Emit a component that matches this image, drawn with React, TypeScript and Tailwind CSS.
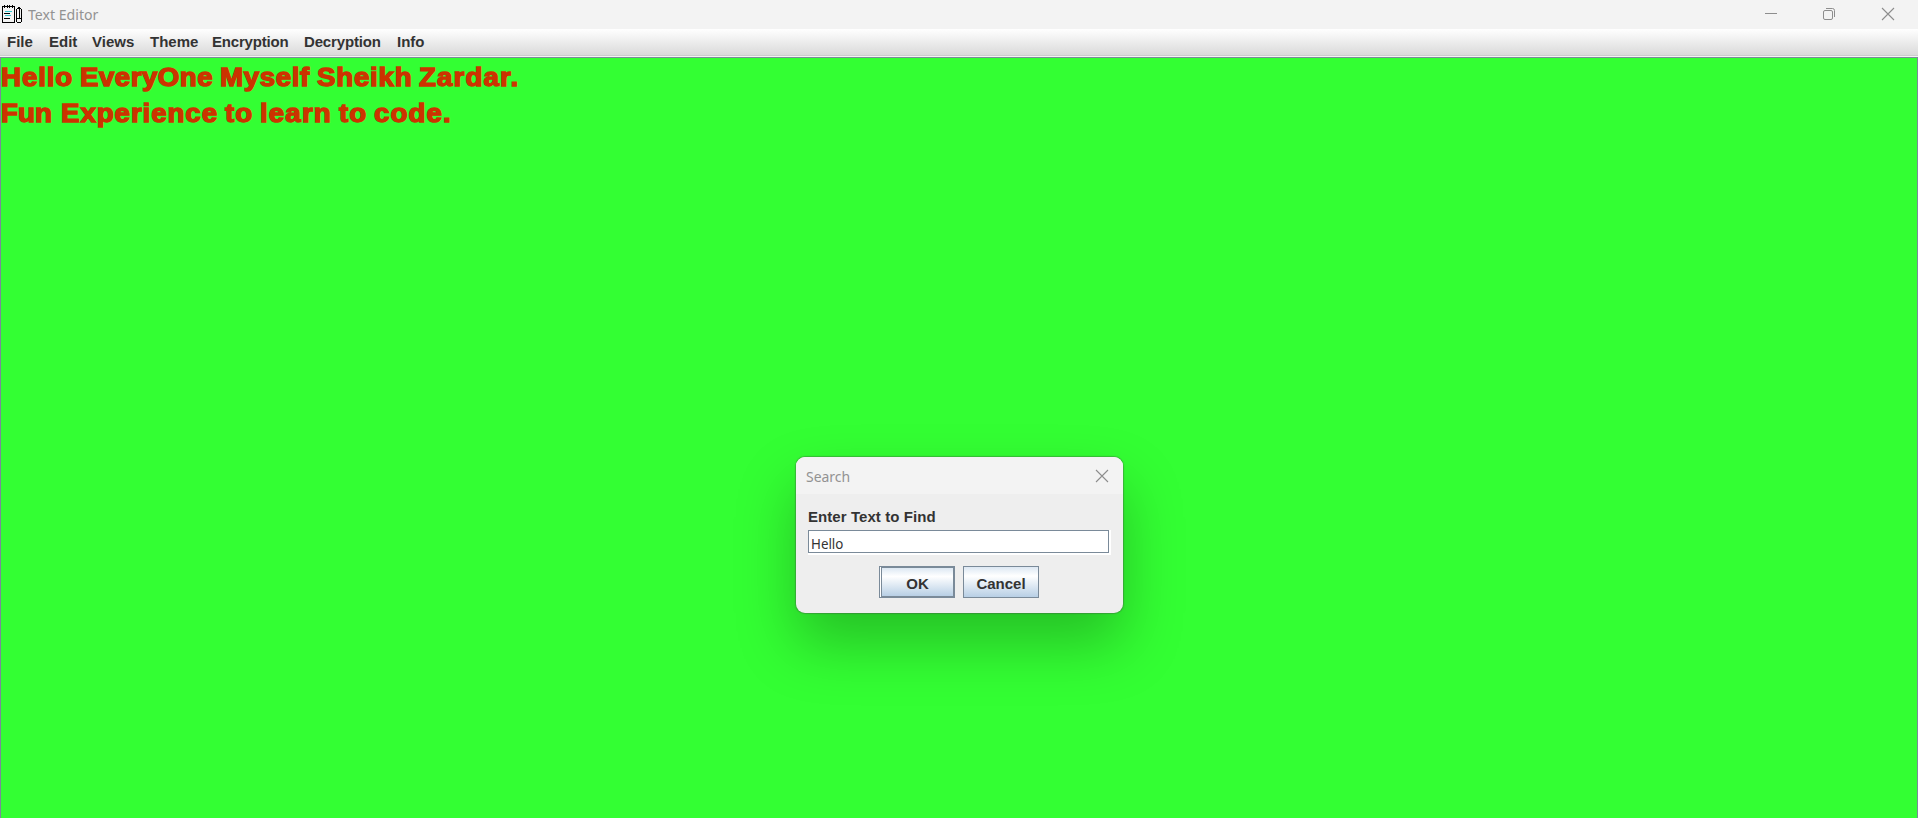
import React from "react";

const menus = [
  { label: "File", cls: "w-[42px]" },
  { label: "Edit", cls: "w-[43px]" },
  { label: "Views", cls: "w-[58px]" },
  { label: "Theme", cls: "w-[62px]" },
  { label: "Encryption", cls: "w-[92px] tracking-[-0.2px]" },
  { label: "Decryption", cls: "w-[93px] tracking-[-0.15px]" },
  { label: "Info", cls: "w-[40px]" },
];

const lines = [
  [
    { word: "Hello", cls: "w-[79px] tracking-[0.78px]" },
    { word: "EveryOne", cls: "w-[139.5px] tracking-[0.4px]" },
    { word: "Myself", cls: "w-[97px] tracking-[0.5px]" },
    { word: "Sheikh", cls: "w-[102px] tracking-[0.65px]" },
    { word: "Zardar.", cls: "w-[104px] tracking-[1px]" },
  ],
  [
    { word: "Fun", cls: "w-[59.5px] tracking-[0.1px]" },
    { word: "Experience", cls: "w-[164px] tracking-[0.8px]" },
    { word: "to", cls: "w-[35px] tracking-[0.95px]" },
    { word: "learn", cls: "w-[79.5px] tracking-[1px]" },
    { word: "to", cls: "w-[34.5px] tracking-[0.95px]" },
    { word: "code.", cls: "w-[82px] tracking-[0.94px]" },
  ],
];

function NotepadIcon() {
  return (
    <svg width="20" height="18" viewBox="0 0 20 18" shapeRendering="crispEdges" fill="none" stroke="#000">
      <path d="M0.5 1V17.5H12.5V1.5H0" />
      <path d="M2.5 0V3M5.5 0V3M7.5 0V3M10.5 0V3" />
      <path d="M3 6.5H10M3 10.5H9" stroke="#35c4cc" />
      <path d="M2 8.5H8M2 13.5H8" />
      <path d="M14.5 4V17M19.5 4V17M15 3.5H19M16 2.5H18M15 17.5H19M15 13.5H19M17.5 4V13" />
    </svg>
  );
}

function CloseIcon() {
  return (
    <svg width="14" height="14" viewBox="0 0 14 14" fill="none" stroke="#8d8d8d" strokeWidth="1.1">
      <path d="M1 1L13 13M13 1L1 13" />
    </svg>
  );
}

export default function App() {
  return (
    <div className="relative flex h-[818px] w-[1918px] flex-col overflow-hidden bg-[#f3f3f3] font-['Liberation_Sans',sans-serif] text-[#333]">
      <header className="flex h-[29px] shrink-0 items-start justify-between">
        <div className="flex pl-[2px] pt-[5px]">
          <NotepadIcon />
          <span className="ml-[6px] origin-left scale-x-[0.94] font-['Noto_Sans',sans-serif] text-[15px] leading-[19px] text-[#929292]">Text Editor</span>
        </div>
        <div className="flex items-center pr-[23px] pt-[7px]">
          <svg width="14" height="14" viewBox="0 0 14 14"><path d="M1 6.5H13" stroke="#8d8d8d" /></svg>
          <svg className="ml-[44px] mr-[45px]" width="14" height="14" viewBox="0 0 14 14" fill="none" stroke="#8d8d8d"><rect x="1.5" y="3.5" width="9" height="9" rx="1.5" /><path d="M4 1.5H10.5Q12.5 1.5 12.5 3.5V10" /></svg>
          <CloseIcon />
        </div>
      </header>
      <nav className="flex h-[27px] shrink-0 border-b border-[#cccccc] bg-linear-to-b from-white to-[#dadada] pl-[7px] text-[15px] font-bold leading-[26px]">
        {menus.map((m) => (
          <span key={m.label} className={m.cls}>{m.label}</span>
        ))}
      </nav>
      <main className="mt-px flex-1 border-x border-t border-[#7a8a99] bg-[#33ff33] pt-[1px] text-[25px] font-bold leading-[36px] text-[#cc3300] [-webkit-text-stroke:1.3px_#cc3300]">
        {lines.map((words, i) => (
          <div key={i} className="flex">
            {words.map((w, j) => (
              <span key={j} className={w.cls}>
                <span className="inline-block origin-left scale-x-[1.11]">{w.word}</span>
              </span>
            ))}
          </div>
        ))}
      </main>
      <section className="absolute left-[796px] top-[457px] h-[156px] w-[327px] rounded-[9px] bg-[#eeeeee] shadow-[0_0_1px_1px_rgba(70,70,70,0.35),0_30px_60px_rgba(0,0,0,0.25)]">
        <div className="flex h-[37px] items-center justify-between rounded-t-[9px] bg-[#f3f3f3] pl-[10px] pr-[14px]">
          <span className="origin-left scale-x-[0.93] pt-px font-['Noto_Sans',sans-serif] text-[15px] text-[#929292]">Search</span>
          <CloseIcon />
        </div>
        <div className="px-[12px] pt-[13px]">
          <label className="block h-[23px] text-[15px] font-bold leading-[20px] tracking-[0.07px]">Enter Text to Find</label>
          <div className="h-[25px] w-[303px] bg-white pb-[2px] pr-[2px]">
            <div className="h-[23px] border border-[#7a8a99] pl-[2px]">
              <span className="block origin-left scale-x-[0.89] font-['Noto_Sans',sans-serif] text-[15px] leading-[25px]">Hello</span>
            </div>
          </div>
          <div className="mt-[11px] flex gap-[8px] pl-[71px] text-[15px] font-bold">
            <button className="h-[32px] w-[76px] border border-[#7a8a99] bg-white pl-px">
              <span className="block h-[30px] border border-[#7a8a99] bg-linear-to-b from-[#dde8f3] via-white via-30% to-[#b8cfe5] leading-[31px]">OK</span>
            </button>
            <button className="h-[32px] w-[76px] border border-[#7a8a99] bg-linear-to-b from-[#dde8f3] via-white via-30% to-[#b8cfe5] pt-[4px]">Cancel</button>
          </div>
        </div>
      </section>
    </div>
  );
}
